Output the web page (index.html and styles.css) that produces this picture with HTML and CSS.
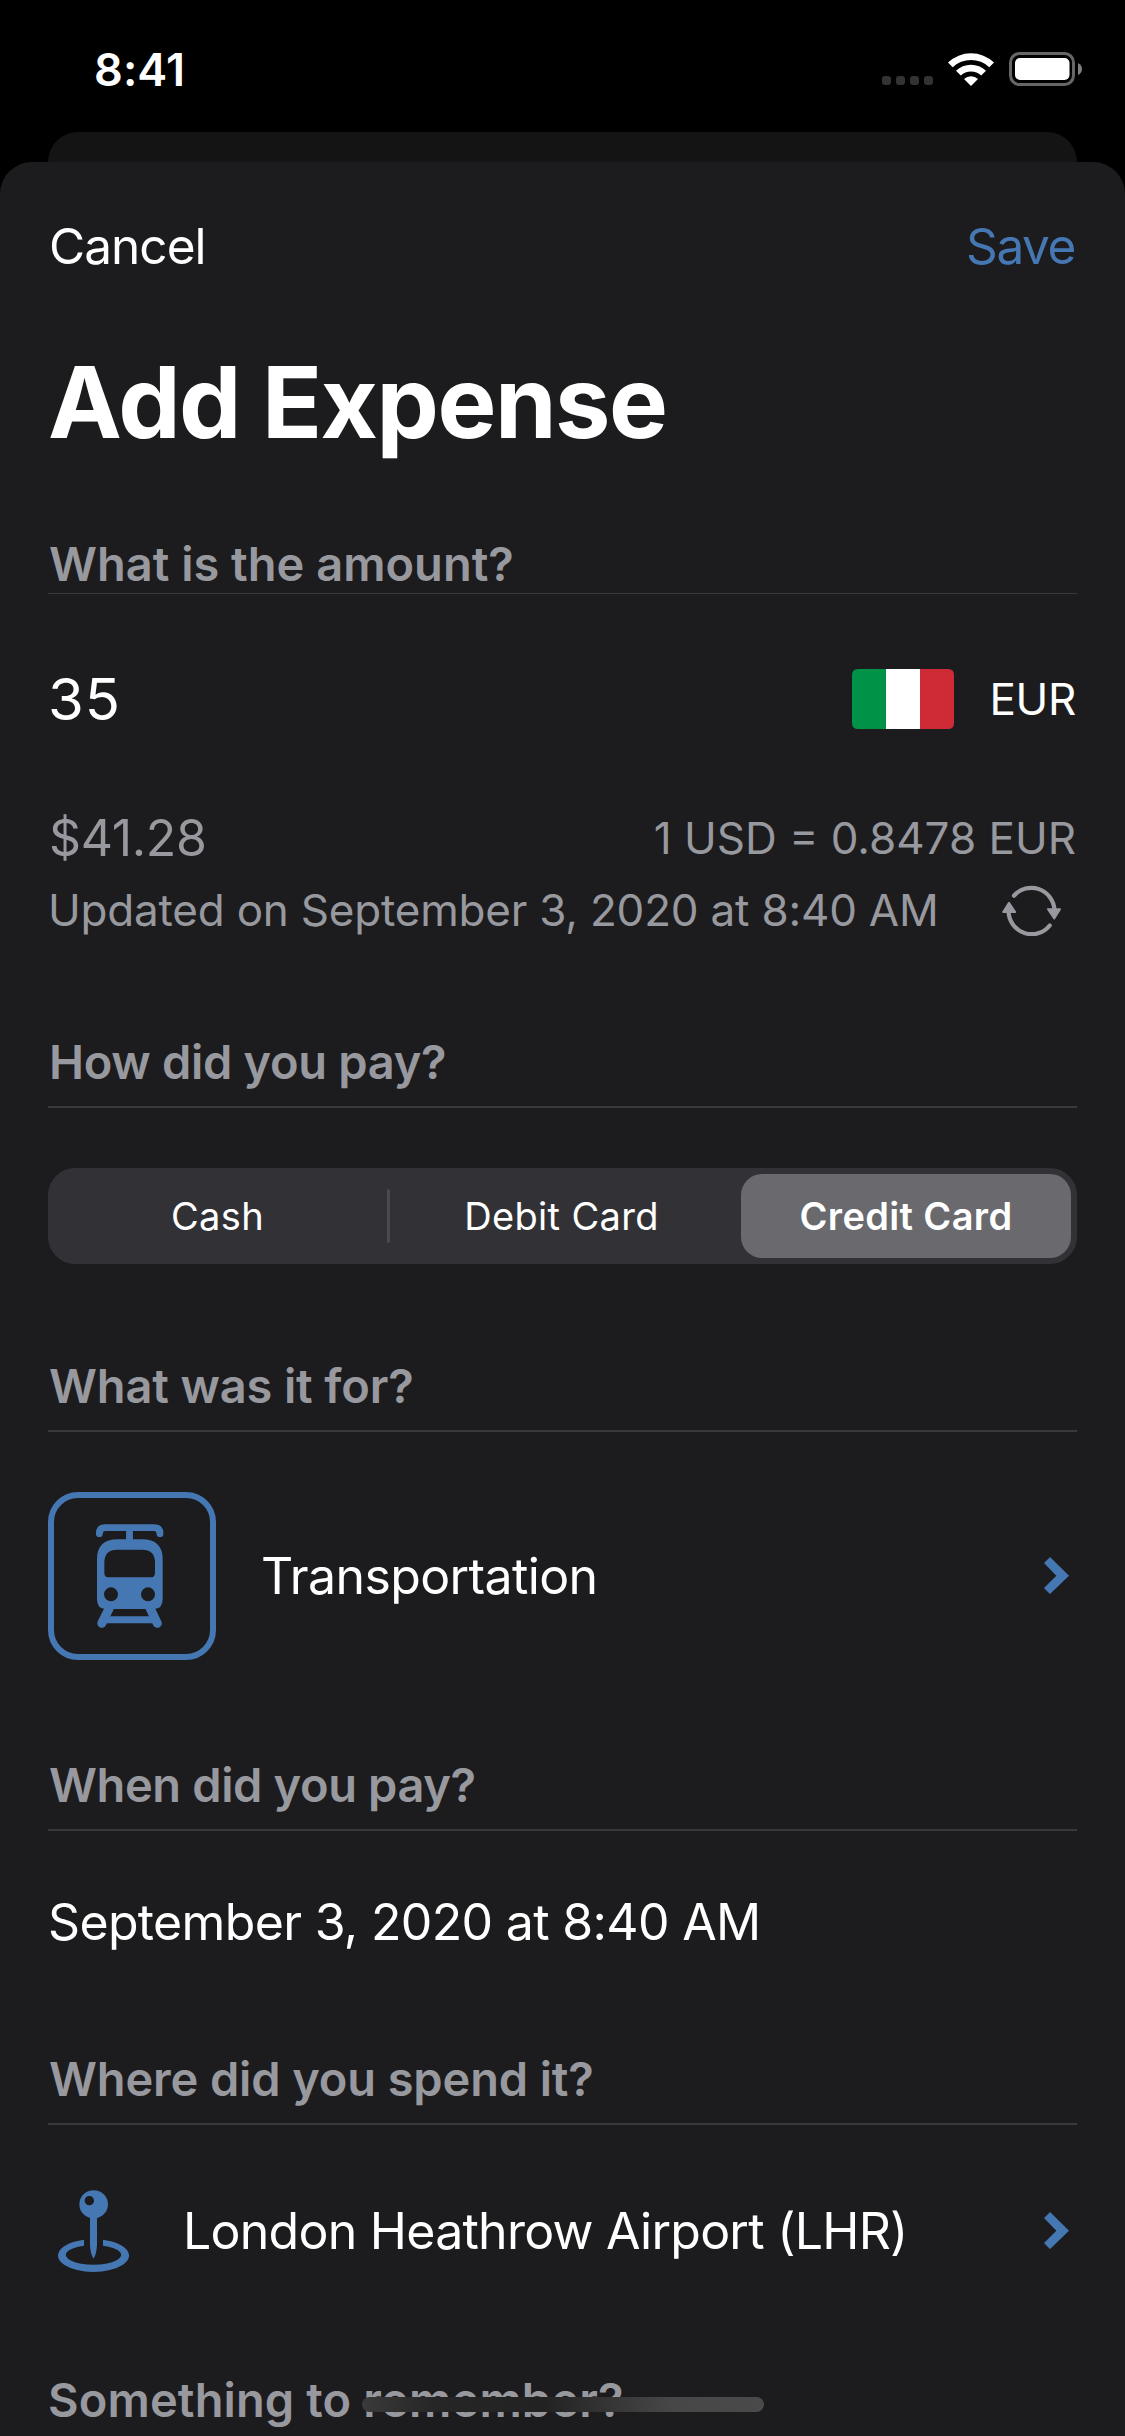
FILE: index.html
```
<!DOCTYPE html>
<html lang="en">
<head>
<meta charset="utf-8">
<title>Add Expense</title>
<link rel="stylesheet" href="styles.css">
</head>
<body>
<div class="screen">
  <header class="status">
    <span class="time">8:41</span>
    <div class="indicators">
      <div class="dots"><i></i><i></i><i></i><i></i></div>
      <svg class="wifi" viewBox="0 0 46 34" fill="#fff">
        <path d="M0 10.6 A33.2 33.2 0 0 1 46 10.6 L41.3 15.2 A26.6 26.6 0 0 0 4.7 15.2 Z"/>
        <path d="M8 18.8 A21.6 21.6 0 0 1 38 18.8 L33.2 23.6 A14.8 14.8 0 0 0 12.8 23.6 Z"/>
        <path d="M16 27 A10.4 10.4 0 0 1 30 27 L23 34 Z"/>
      </svg>
      <svg class="battery" viewBox="0 0 73 34">
        <rect x="1.5" y="1.5" width="63" height="31" rx="9" fill="none" stroke="#666" stroke-width="3"/>
        <rect x="6" y="6" width="54.5" height="22" rx="5" fill="#fff"/>
        <path d="M69 11 Q73 13 73 17 Q73 21 69 23 Z" fill="#808080"/>
      </svg>
    </div>
  </header>
  <div class="card-behind"></div>

  <main class="sheet">
    <nav class="nav">
      <span class="cancel">Cancel</span>
      <span class="save">Save</span>
    </nav>
    <h1 class="title">Add Expense</h1>

    <section class="amount">
      <h2 class="label tight">What is the amount?</h2>
      <div class="row amount-row">
        <span class="value">35</span>
        <div class="currency">
          <svg class="flag" viewBox="0 0 102 60">
            <path d="M34 0H6Q0 0 0 6V54Q0 60 6 60H34Z" fill="#009246"/>
            <rect x="34" width="34" height="60" fill="#fff"/>
            <path d="M68 0H96Q102 0 102 6V54Q102 60 96 60H68Z" fill="#ce2b37"/>
          </svg>
          <span class="code">EUR</span>
        </div>
      </div>
      <div class="row rate-row">
        <span class="converted">$41.28</span>
        <span class="rate">1 USD = 0.8478 EUR</span>
      </div>
      <div class="row updated-row">
        <span class="updated">Updated on September 3, 2020 at 8:40 AM</span>
        <svg class="refresh" viewBox="0 0 59 51">
          <g fill="none" stroke="#98989f" stroke-width="4.2" stroke-linecap="round">
            <path d="M12 10.7 A23.2 23.5 0 0 1 52.5 25"/>
            <path d="M47.7 40.5 A23.2 23.5 0 0 1 6.5 26"/>
          </g>
          <g fill="#98989f" stroke="#98989f" stroke-width="2" stroke-linejoin="round">
            <path d="M46 24.2H58L52.2 33.5Z"/>
            <path d="M1.2 27H13.2L7 17.8Z"/>
          </g>
        </svg>
      </div>
    </section>

    <section class="payment">
      <h2 class="label how">How did you pay?</h2>
      <div class="segments">
        <span class="segment cash">Cash</span>
        <i class="separator"></i>
        <span class="segment debit">Debit Card</span>
        <span class="segment selected">Credit Card</span>
      </div>
    </section>

    <section class="category">
      <h2 class="label w">What was it for?</h2>
      <div class="row category-row">
        <svg class="train" viewBox="54 66 504 504">
          <rect x="63" y="75" width="486" height="486" rx="81" fill="none" stroke="#4577b3" stroke-width="18"/>
          <path d="M208 191Q208 173 225 173H373Q390 173 390 191M298.500 175V212" fill="none" stroke="#4577b3" stroke-width="20.500" stroke-linecap="round"/>
          <path fill="#4577b3" fill-rule="evenodd" d="M201 268Q201 208 263 208H336Q398 208 398 268V388Q398 417 372 417H227Q201 417 201 388ZM223 278V308Q223 322 237 322H361Q375 322 375 308V278Q375 239 336 239H262Q223 239 223 278ZM222 373a21 21 0 1 0 42 0a21 21 0 1 0-42 0ZM333 373a21 21 0 1 0 42 0a21 21 0 1 0-42 0Z"/>
          <path d="M238 414L215.500 460M360 414L382 460" fill="none" stroke="#4577b3" stroke-width="27" stroke-linecap="round"/>
          <path d="M220 449H378" stroke="#4577b3" stroke-width="21"/>
        </svg>
        <span class="category-name">Transportation</span>
        <svg class="chevron" viewBox="0 0 75 112"><path d="M18 0L75 56L18 111L0 93L37 56L0 18Z" fill="#4577b3"/></svg>
      </div>
    </section>

    <section class="date">
      <h2 class="label when">When did you pay?</h2>
      <div class="date-value">September 3, 2020 at 8:40 AM</div>
    </section>

    <section class="place">
      <h2 class="label w">Where did you spend it?</h2>
      <div class="row place-row">
        <svg class="pin" viewBox="54 61 213 246" fill="#4577b3">
          <path d="M132 210.500A106.500 49 0 1 0 189 210.500V228A83 29.500 0 1 1 132 228Z"/>
          <path d="M150 138H171V225Q170 252 160.500 267Q151 252 150 225Z"/>
          <path fill-rule="evenodd" d="M118 104a43 42.500 0 1 0 86 0a43 42.500 0 1 0-86 0ZM134 93a14 14 0 1 0 28 0a14 14 0 1 0-28 0Z"/>
        </svg>
        <span class="place-name">London Heathrow Airport (LHR)</span>
        <svg class="chevron" viewBox="0 0 75 112"><path d="M18 0L75 56L18 111L0 93L37 56L0 18Z" fill="#4577b3"/></svg>
      </div>
    </section>

    <section class="note">
      <h2 class="label something">Something to remember?</h2>
    </section>
  </main>
  <div class="home-indicator"></div>
</div>
</body>
</html>
```
FILE: styles.css
```
* { box-sizing: border-box; }
body {
  margin: 0;
  background: #000;
  color: #fff;
  font-family: Inter, "Liberation Sans", sans-serif;
}
i, svg { display: block; flex: none; }
.screen {
  position: relative;
  display: flex;
  flex-direction: column;
  width: 1125px;
  height: 2436px;
  overflow: hidden;
  white-space: nowrap;
}

/* Status bar */
.status {
  display: flex;
  justify-content: space-between;
  height: 132px;
  padding: 0 43px 0 94px;
}
.time {
  margin-top: 40px;
  font-size: 45px;
  line-height: 60px;
  font-weight: 600;
  letter-spacing: .1px;
}
.indicators { display: flex; margin-top: 52px; height: 34px; }
.dots { display: flex; gap: 5px; margin: 24px 15px 0 0; }
.dots i { width: 9px; height: 9px; border-radius: 3px; background: #333; }
.wifi { width: 46px; height: 34px; margin-right: 15px; }
.battery { width: 73px; height: 34px; }

/* Sheets */
.card-behind {
  flex: none;
  height: 30px;
  margin: 0 48px;
  border-radius: 30px 30px 0 0;
  background: #141414;
}
.sheet {
  flex: 1;
  min-height: 0;
  padding: 54px 48px 0;
  border-radius: 32px 32px 0 0;
  background: #1c1c1e;
}
.nav {
  display: flex;
  justify-content: space-between;
  padding: 0 2px 0 1px;
  font-size: 49.5px;
  line-height: 60px;
}
.cancel { letter-spacing: -.95px; }
.save { letter-spacing: -1.4px; color: #4577b3; }
.title {
  margin: 66px 0 74px;
  font-size: 99px;
  line-height: 120px;
  font-weight: 700;
  letter-spacing: -1.49px;
}
.row { display: flex; align-items: center; }
.label {
  margin: 0;
  padding-bottom: 16px;
  border-bottom: 2px solid #39393c;
  color: #98989f;
  font-size: 47px;
  line-height: 56px;
  font-weight: 600;
}
.tight { padding: 0 0 1px 1px; border-width: 1px; }
.how { padding-left: 1px; letter-spacing: -.31px; }
.w { padding-left: 1px; letter-spacing: -.14px; }
.when { padding-left: 1px; letter-spacing: -.38px; }
.something { letter-spacing: .13px; }

/* Amount */
.amount-row { justify-content: space-between; height: 60px; margin-top: 75px; }
.value { font-size: 58px; letter-spacing: .8px; }
.currency { display: flex; align-items: center; gap: 36px; padding-right: 1px; }
.flag { width: 102px; height: 60px; }
.code { font-size: 44px; letter-spacing: -.34px; }
.rate-row {
  justify-content: space-between;
  height: 60px;
  margin-top: 79px;
  padding-right: 1px;
  color: #98989f;
}
.converted { margin-left: 1px; font-size: 50px; letter-spacing: -.33px; }
.rate { font-size: 44px; }
.updated-row {
  justify-content: space-between;
  height: 60px;
  margin-top: 12px;
  padding-right: 16px;
  color: #98989f;
}
.updated { font-size: 44px; letter-spacing: -.2px; }
.refresh { width: 59px; height: 51px; }

/* Payment method */
.payment { margin-top: 94px; }
.segments {
  display: flex;
  align-items: center;
  height: 96px;
  margin-top: 60px;
  padding: 6px;
  border-radius: 27px;
  background: #323236;
  font-size: 38px;
  line-height: 84px;
  text-align: center;
}
.segment { letter-spacing: .35px; }
.cash { width: 327px; }
.separator { width: 3px; height: 54px; margin-left: 6px; border-radius: 2px; background: #4a4a4f; }
.debit { flex: 1; margin-right: 8px; }
.selected {
  width: 330px;
  border-radius: 21px;
  background: #69696e;
  font-weight: 600;
  letter-spacing: .36px;
}

/* Category, date, place, note */
.category { margin-top: 94px; }
.category-row { margin-top: 60px; padding-right: 8px; }
.train { width: 168px; height: 168px; }
.category-name { flex: 1; margin-left: 45px; font-size: 50px; letter-spacing: -.62px; }
.chevron { width: 25px; height: 37.5px; }
.date { margin-top: 97px; }
.date-value { margin-top: 61px; font-size: 50px; line-height: 60px; letter-spacing: -.66px; }
.place { margin-top: 99px; }
.place-row { height: 79px; margin-top: 66px; padding: 0 8px 0 10px; }
.pin { width: 71px; height: 82px; }
.place-name { flex: 1; margin-left: 54px; font-size: 50px; letter-spacing: -.74px; }
.note { margin-top: 102px; }

/* Floats above the sheet */
.home-indicator {
  position: absolute;
  bottom: 24px;
  left: 362px;
  width: 402px;
  height: 15px;
  border-radius: 8px;
  background: linear-gradient(90deg, #3a3a3a, #262626 18%, #222 45%, #474747 77%, #4a4a4a);
}
```
